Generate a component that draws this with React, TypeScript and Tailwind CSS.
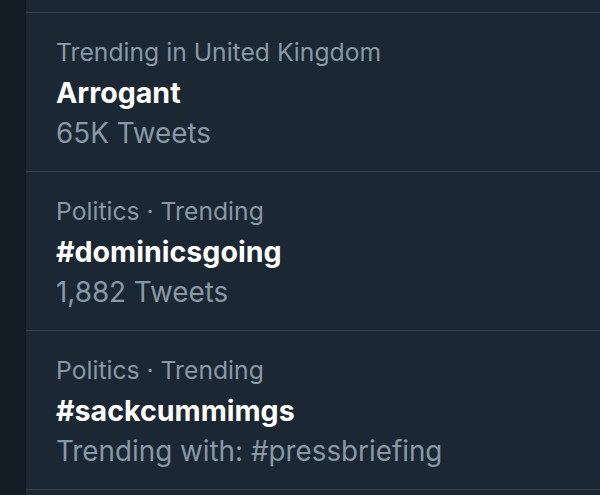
import React from "react";

type Trend = { context: string; name: string; meta: string };

const trends: Trend[] = [
  { context: "Trending in United Kingdom", name: "Arrogant", meta: "65K Tweets" },
  { context: "Politics · Trending", name: "#dominicsgoing", meta: "1,882 Tweets" },
  { context: "Politics · Trending", name: "#sackcummimgs", meta: "Trending with: #pressbriefing" },
];

const App: React.FC = () => {
  return (
    <div className="flex w-[600px] h-[495px] overflow-hidden bg-[#141d26] font-['Inter',sans-serif]">
      <div className="w-[26px] shrink-0 bg-[#141d26]" />
      <div className="flex flex-col flex-1 bg-[#1b2733]">
        <div className="h-[12px] shrink-0" />
        {trends.map((t, i) => (
          <div
            key={i}
            className="flex flex-col border-t border-[#38444d] pl-[30px] pt-[19px] pb-[17px]"
          >
            <div className="text-[#8899a6] text-[24.7px] leading-[40px]">{t.context}</div>
            <div className="text-white font-bold text-[28.6px] leading-[41px]">{t.name}</div>
            <div className="text-[#8899a6] text-[27.8px] leading-[41px]">{t.meta}</div>
          </div>
        ))}
        <div className="border-t border-[#38444d]" />
      </div>
    </div>
  );
};

export default App;
